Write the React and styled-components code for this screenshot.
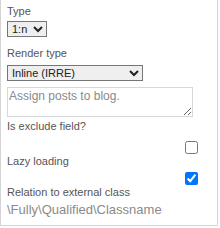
import React from 'react';
import { createGlobalStyle, styled } from 'styled-components';

const GlobalStyle = createGlobalStyle`
  html, body {
    margin: 0;
    padding: 0;
    background: #fff;
  }
  body {
    font-family: "Liberation Sans", Arial, sans-serif;
  }
`;

const Panel = styled.div`
  width: 218px;
  height: 226px;
  box-sizing: border-box;
  border: 1px solid #d4d4d4;
  border-top: none;
  padding: 4px 6px 0 6px;
  display: flex;
  flex-direction: column;
`;

const Label = styled.div`
  font-size: 11px;
  line-height: 14px;
  color: #555;
  margin-top: ${(p) => p.$top || 0}px;
`;

const Select = styled.select`
  font-family: "Liberation Sans", Arial, sans-serif;
  font-size: 11px;
  color: #222;
  width: ${(p) => p.$width}px;
  height: 16px;
  box-sizing: border-box;
  margin-top: ${(p) => p.$top || 3}px;
  padding: 0;
  border: 1px solid #767676;
  border-radius: 0;
  background: #efefef;
`;

const TextArea = styled.textarea`
  font-family: "Liberation Sans", Arial, sans-serif;
  font-size: 12px;
  width: 186px;
  height: 30px;
  box-sizing: border-box;
  margin-top: 6px;
  padding: 1px 1px;
  border: 1px solid #d8d8d8;
  resize: vertical;
  &::placeholder {
    color: #8a8a8a;
  }
`;

const CheckRow = styled.div`
  display: flex;
  justify-content: flex-end;
  width: 191px;
  margin-top: ${(p) => p.$top}px;
`;

const Check = styled.input`
  width: 13px;
  height: 13px;
  margin: 0;
`;

const ClassInput = styled.input`
  font-family: "Liberation Sans", Arial, sans-serif;
  font-size: 13px;
  border: none;
  outline: none;
  padding: 0;
  margin-top: 3px;
  width: 200px;
  color: #888;
  &::placeholder {
    color: #8a8a8a;
  }
`;

export default function App() {
  return (
    <>
      <GlobalStyle />
      <Panel>
        <Label>Type</Label>
        <Select $width={40} defaultValue="1:n">
          <option>1:n</option>
        </Select>
        <Label $top={9}>Render type</Label>
        <Select $width={136} $top={5} defaultValue="Inline (IRRE)">
          <option>Inline (IRRE)</option>
        </Select>
        <TextArea placeholder="Assign posts to blog." />
        <Label $top={2}>Is exclude field?</Label>
        <CheckRow $top={8}>
          <Check type="checkbox" />
        </CheckRow>
        <Label>Lazy loading</Label>
        <CheckRow $top={4}>
          <Check type="checkbox" defaultChecked />
        </CheckRow>
        <Label>Relation to external class</Label>
        <ClassInput placeholder="\Fully\Qualified\Classname" />
      </Panel>
    </>
  );
}
